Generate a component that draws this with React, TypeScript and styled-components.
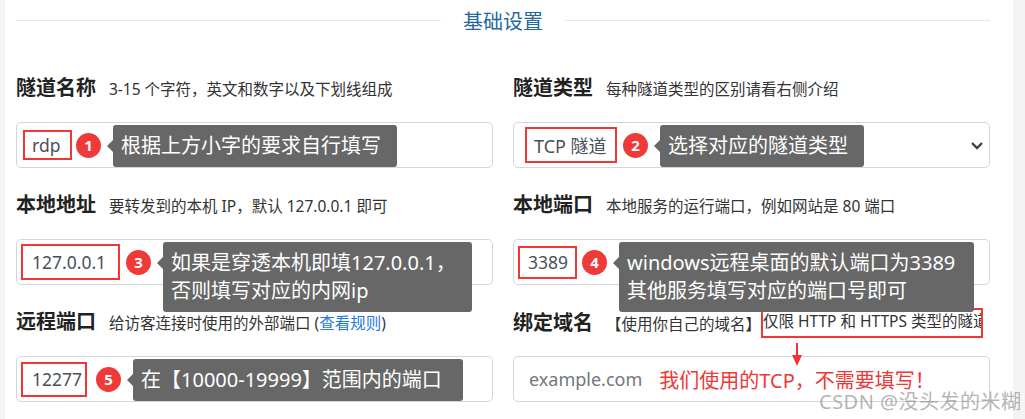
import styled, { createGlobalStyle } from 'styled-components';

const GlobalStyle = createGlobalStyle`
  body {
    margin: 0;
    background: #f4f4f4;
    font-family: "Noto Sans", "Noto Sans CJK SC", sans-serif;
  }
`;

const Page = styled.div`
  display: flex;
  height: 419px;
  overflow: hidden;
`;

const Panel = styled.div`
  position: relative;
  margin-left: 5px;
  width: 1008px;
  box-sizing: border-box;
  padding: 0 23px 0 11px;
  background: #fff;
`;

const Header = styled.div`
  display: flex;
  align-items: center;
  gap: 22px;
  height: 40px;
  &::before,
  &::after {
    content: '';
    flex: 1;
    height: 1px;
    background: #e1eaed;
  }
`;

const HeaderTitle = styled.span`
  font-size: 20px;
  line-height: 24px;
  margin-top: 4px;
  color: #23689f;
`;

const Grid = styled.div`
  display: grid;
  grid-template-columns: 477px 477px;
  column-gap: 20px;
  padding-top: 36px;
`;

const Field = styled.div`
  position: relative;
  padding-bottom: 25px;
`;

const LabelRow = styled.div`
  display: flex;
  align-items: baseline;
  height: 24px;
  white-space: nowrap;
`;

const Label = styled.span`
  font-size: 20px;
  line-height: 24px;
  font-weight: 700;
  color: #222;
  margin-right: 13px;
`;

const Desc = styled.span`
  font-size: 15.5px;
  line-height: 24px;
  color: #333;
`;

const RuleLink = styled.span`
  color: #1f78e0;
`;

// red frame drawn around part of the hint text; negative margins keep the row height
const DescMark = styled.span`
  display: inline-block;
  box-sizing: border-box;
  width: 222px;
  margin: -2px 0 -8px 0;
  padding: 1px 0 5px 0;
  line-height: 20px;
  border: 2px solid #f23535;
  overflow: hidden;
  white-space: nowrap;
`;

const InputBox = styled.div<{ $pl: number }>`
  margin-top: 22px;
  height: 46px;
  box-sizing: border-box;
  border: 1px solid #d3d7dc;
  border-radius: 5px;
  display: flex;
  align-items: center;
  padding-left: ${p => p.$pl}px;
  background: #fff;
`;

const RedBox = styled.span<{ $w: number; $h: number; $tl: number; $fs?: number }>`
  display: flex;
  align-items: center;
  box-sizing: border-box;
  width: ${p => p.$w}px;
  height: ${p => p.$h}px;
  padding-left: ${p => p.$tl}px;
  border: 2px solid #f23535;
  font-size: ${p => p.$fs ?? 17.5}px;
  color: #4a5058;
  white-space: nowrap;
`;

const Badge = styled.span<{ $ml: number }>`
  flex: none;
  width: 25px;
  height: 25px;
  margin-left: ${p => p.$ml}px;
  border-radius: 50%;
  background: #f03a3a;
  color: #fff;
  font-size: 15px;
  font-weight: 700;
  display: flex;
  align-items: center;
  justify-content: center;
`;

const Tip = styled.div<{ $w: number; $ml?: number }>`
  position: relative;
  z-index: 1;
  flex: none;
  align-self: flex-start;
  margin-top: 2px;
  margin-left: ${p => p.$ml ?? 12}px;
  width: ${p => p.$w}px;
  box-sizing: border-box;
  padding: 7px 0 7px 8px;
  background: #676767;
  border-radius: 3px;
  color: #fff;
  font-size: 20px;
  line-height: 28px;
  white-space: nowrap;
  &::before {
    content: '';
    position: absolute;
    left: -6px;
    top: 15px;
    border-top: 6px solid transparent;
    border-bottom: 6px solid transparent;
    border-right: 6px solid #676767;
  }
`;

const Chevron = styled.svg`
  margin-left: auto;
  margin-right: 5px;
`;

const Placeholder = styled.span`
  font-size: 18px;
  color: #6f7780;
`;

const RedNote = styled.span`
  margin-left: 17px;
  font-size: 20px;
  color: #f03636;
`;

const DownArrow = styled.svg`
  position: absolute;
  left: 278px;
  top: 33px;
  z-index: 2;
`;

const Watermark = styled.div`
  position: absolute;
  left: 814px;
  top: 386px;
  font-size: 20px;
  letter-spacing: 0.5px;
  color: rgba(130, 130, 130, 0.6);
  white-space: nowrap;
`;

export default function App() {
  return (
    <Page>
      <GlobalStyle />
      <Panel>
        <Header>
          <HeaderTitle>基础设置</HeaderTitle>
        </Header>
        <Grid>
          <Field>
            <LabelRow>
              <Label>隧道名称</Label>
              <Desc>3-15 个字符，英文和数字以及下划线组成</Desc>
            </LabelRow>
            <InputBox $pl={6}>
              <RedBox $w={49} $h={30} $tl={7}>rdp</RedBox>
              <Badge $ml={4}>1</Badge>
              <Tip $w={284}>根据上方小字的要求自行填写</Tip>
            </InputBox>
          </Field>
          <Field>
            <LabelRow>
              <Label>隧道类型</Label>
              <Desc>每种隧道类型的区别请看右侧介绍</Desc>
            </LabelRow>
            <InputBox $pl={11}>
              <RedBox $w={92} $h={36} $tl={7} $fs={18}>TCP 隧道</RedBox>
              <Badge $ml={6}>2</Badge>
              <Tip $w={204}>选择对应的隧道类型</Tip>
              <Chevron width="14" height="9" viewBox="0 0 14 9">
                <path d="M2 2 L7 7 L12 2" fill="none" stroke="#3d4247" strokeWidth="2.4" />
              </Chevron>
            </InputBox>
          </Field>
          <Field>
            <LabelRow>
              <Label>本地地址</Label>
              <Desc>要转发到的本机 IP，默认 127.0.0.1 即可</Desc>
            </LabelRow>
            <InputBox $pl={4}>
              <RedBox $w={99} $h={36} $tl={9}>127.0.0.1</RedBox>
              <Badge $ml={6}>3</Badge>
              <Tip $w={309}>
                如果是穿透本机即填127.0.0.1，
                <br />
                否则填写对应的内网ip
              </Tip>
            </InputBox>
          </Field>
          <Field>
            <LabelRow>
              <Label>本地端口</Label>
              <Desc>本地服务的运行端口，例如网站是 80 端口</Desc>
            </LabelRow>
            <InputBox $pl={4}>
              <RedBox $w={59} $h={33} $tl={8}>3389</RedBox>
              <Badge $ml={5}>4</Badge>
              <Tip $w={355}>
                windows远程桌面的默认端口为3389
                <br />
                其他服务填写对应的端口号即可
              </Tip>
            </InputBox>
          </Field>
          <Field>
            <LabelRow>
              <Label>远程端口</Label>
              <Desc>
                给访客连接时使用的外部端口 (<RuleLink>查看规则</RuleLink>)
              </Desc>
            </LabelRow>
            <InputBox $pl={4}>
              <RedBox $w={66} $h={35} $tl={9}>12277</RedBox>
              <Badge $ml={9}>5</Badge>
              <Tip $w={330}>在【10000-19999】范围内的端口</Tip>
            </InputBox>
          </Field>
          <Field>
            <LabelRow>
              <Label>绑定域名</Label>
              <Desc>
                【使用你自己的域名】<DescMark>仅限 HTTP 和 HTTPS 类型的隧道</DescMark>
              </Desc>
            </LabelRow>
            <DownArrow width="12" height="24" viewBox="0 0 12 24">
              <line x1="6" y1="0" x2="6" y2="14" stroke="#f03636" strokeWidth="2" />
              <polygon points="1,12 11,12 6,23" fill="#f03636" />
            </DownArrow>
            <InputBox $pl={15}>
              <Placeholder>example.com</Placeholder>
              <RedNote>我们使用的TCP，不需要填写！</RedNote>
            </InputBox>
          </Field>
        </Grid>
        <Watermark>CSDN @没头发的米糊</Watermark>
      </Panel>
    </Page>
  );
}
